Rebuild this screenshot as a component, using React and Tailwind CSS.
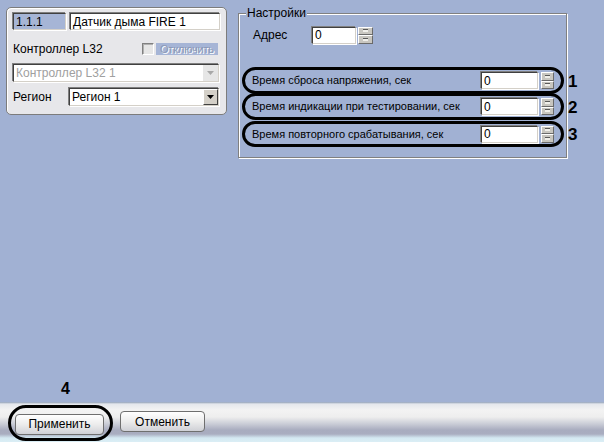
import React from 'react';

const sunken =
  'border border-t-[#404040] border-l-[#404040] border-r-[#d4d0c8] border-b-[#d4d0c8] shadow-[-1px_-1px_0_#808080,1px_1px_0_#ffffff]';

const Spinner = ({ className = '' }) => (
  <div className={`flex flex-col h-[17px] w-[13px] ${className}`}>
    {[0, 1].map((i) => (
      <div
        key={i}
        className="flex-1 flex items-center justify-center bg-[#c8c6c0] border border-t-white border-l-white border-r-[#6a6a6a] border-b-[#6a6a6a]"
      >
        <div className="w-[5px] h-[3px] bg-[#f0efea] border-t border-[#5a5a5a]" />
      </div>
    ))}
  </div>
);

const NumField = ({ className = '' }) => (
  <div className={`flex items-center gap-[3px] ${className}`}>
    <div className={`${sunken} w-[57px] h-[17px] bg-white flex items-center pl-[2px] text-[12px] leading-none`}>0</div>
    <Spinner />
  </div>
);

const Select = ({ value, disabled, className = '' }) => (
  <div className={`${sunken} h-[18px] bg-white flex items-center ${className}`}>
    <span className={`flex-1 pl-[2px] text-[12px] leading-none ${disabled ? 'text-[#a0a0a0]' : 'text-black'}`}>
      {value}
    </span>
    <div
      className={`w-[15px] h-full flex items-center justify-center ${
        disabled ? 'bg-[#e6e6e6]' : 'bg-[#d4d0c8] border border-t-white border-l-white border-r-[#404040] border-b-[#404040]'
      }`}
    >
      <svg width="7" height="4" viewBox="0 0 7 4">
        <path d="M0 0h7L3.5 4z" fill={disabled ? '#a8a8a8' : '#000'} />
      </svg>
    </div>
  </div>
);

const Row = ({ label, n, className = '' }) => (
  <div
    className={`relative flex items-center rounded-full border-[3px] border-black pl-[7px] pr-[7px] ${className}`}
  >
    <span className="flex-1 text-[11px]">{label}</span>
    <NumField />
    <span className="absolute left-full ml-[7px] top-1/2 -translate-y-1/2 text-[17px] font-bold leading-none">
      {n}
    </span>
  </div>
);

export default function App() {
  return (
    <div className="w-[604px] h-[442px] bg-[#a1b1d3] flex flex-col font-['Liberation_Sans',Arial,sans-serif] text-black overflow-hidden">
      <div className="flex-1 flex items-start">
        {/* device panel */}
        <div className="ml-[6px] mt-[7px] w-[221px] h-[108px] rounded-[5px] border border-[#7c7c7c] bg-[#e7e7ea] shadow-[inset_1px_1px_0_#ffffff] px-[6px] pt-[5px]">
          <div className="flex gap-[4px]">
            <div className={`${sunken} w-[53px] h-[17px] bg-[#a6b5d6] flex items-center pl-[2px] text-[12px] leading-none`}>
              1.1.1
            </div>
            <div className={`${sunken} w-[150px] h-[17px] bg-white flex items-center pl-[2px] text-[12px] leading-none`}>
              Датчик дыма FIRE 1
            </div>
          </div>
          <div className="flex items-center mt-[13px] h-[12px]">
            <span className="text-[12px] leading-none w-[129px]">Контроллер L32</span>
            <div className="w-[12px] h-[12px] bg-[#e6e6e6] border border-t-[#808080] border-l-[#808080] border-r-white border-b-white shadow-[inset_1px_1px_0_#b0b0b0]" />
            <span className="ml-[2px] w-[62px] h-[12px] bg-[#a6b5d6] text-[11px] tracking-[-0.2px] leading-[12px] text-[#8b98b6] pl-[4px] [text-shadow:1px_1px_0_#ffffff] whitespace-nowrap overflow-hidden">
              Отключить
            </span>
          </div>
          <Select value="Контроллер L32 1" disabled className="mt-[9px] w-[206px]" />
          <div className="flex items-center mt-[6px]">
            <span className="w-[56px] text-[12px] leading-none">Регион</span>
            <Select value="Регион 1" className="w-[150px]" />
          </div>
        </div>

        {/* settings group */}
        <fieldset className="ml-[11px] mt-[6px] w-[329px] h-[152px] border border-[#808080] shadow-[inset_1px_1px_0_#ffffff,1px_1px_0_#ffffff] pb-[10px]">
          <legend className="ml-[7px] px-[1px] bg-[#a1b1d3] text-[12px] leading-[14px]">Настройки</legend>
          <div className="flex items-center ml-[14px] mt-[6px]">
            <span className="w-[59px] text-[12px]">Адрес</span>
            <div className={`${sunken} w-[44px] h-[17px] bg-white flex items-center pl-[2px] text-[12px] leading-none`}>0</div>
            <Spinner className="ml-[2px] w-[15px]" />
          </div>
          <div className="ml-[3px] mr-[2px] mt-[23px] flex flex-col">
            <Row label="Время сброса напряжения, сек" n="1" className="h-[27px]" />
            <Row label="Время индикации при тестировании, сек" n="2" className="h-[27px] -mt-[1px]" />
            <Row label="Время повторного срабатывания, сек" n="3" className="h-[26px] mt-[1px]" />
          </div>
        </fieldset>
      </div>

      {/* bottom toolbar */}
      <div className="h-[40px] flex items-start gap-[16px] pl-[15px] pt-[9px] bg-[linear-gradient(to_bottom,#8fa0b8_0px,#e4e7ec_2px,#f3f3f3_8px,#eeeeee_15px,#c9ccd6_22px,#a8acbf_28px,#a9adc0_32px,#d4e9f2_36px,#dbeef5_40px)]">
        <div className="relative">
          <button className="w-[89px] h-[21px] rounded-[4px] border border-[#6f6f6f] bg-[linear-gradient(to_bottom,#ffffff,#ececec_50%,#cfd0d6)] text-[12px] leading-none">
            Применить
          </button>
          <div className="absolute -left-[7px] -right-[9px] -top-[6px] -bottom-[6px] rounded-full border-[3px] border-black" />
          <span className="absolute left-[46px] -top-[30px] text-[16px] font-bold leading-none">4</span>
        </div>
        <button className="w-[85px] h-[21px] rounded-[4px] border border-[#6f6f6f] bg-[linear-gradient(to_bottom,#ffffff,#ececec_50%,#cfd0d6)] text-[12px] leading-none">
          Отменить
        </button>
      </div>
    </div>
  );
}
